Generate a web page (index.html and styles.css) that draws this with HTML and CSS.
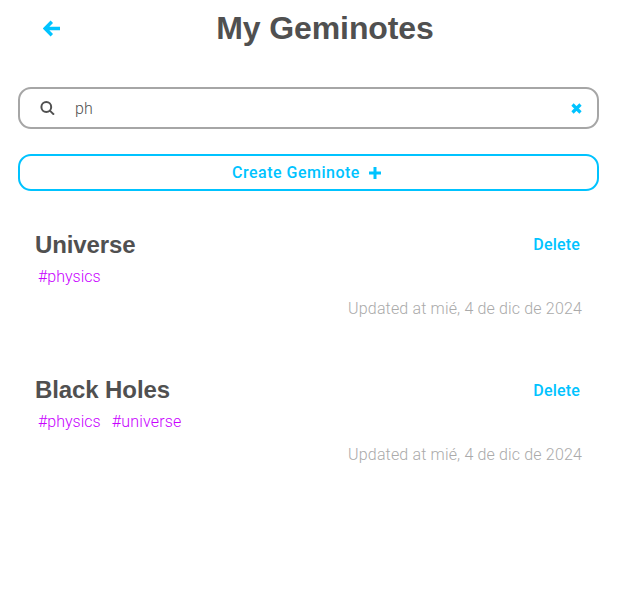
FILE: index.html
```html
<!DOCTYPE html>
<html>
<head>
	<title>My Geminotes</title>
	<link rel="stylesheet" href="styles.css">
</head>
<body>
	<div class="page">
		<div class="header">
			<svg class="back" viewBox="0 0 17 17"><path d="M8.8 1.8 L2.2 8.5 L8.8 15.2 M3 8.5 H17" fill="none" stroke="#00c3ff" stroke-width="3.4"/></svg>
			<h1>My Geminotes</h1>
		</div>

		<div class="search">
			<svg class="lens" viewBox="0 0 15 14"><circle cx="6.3" cy="6" r="4.9" fill="none" stroke="#505050" stroke-width="2"/><path d="M9.8 9.6 L14 13.6" stroke="#505050" stroke-width="2"/></svg>
			<span class="query">ph</span>
			<svg class="clear" viewBox="0 0 11 11"><path d="M1.5 1.5 L9.5 9.5 M9.5 1.5 L1.5 9.5" stroke="#00c3ff" stroke-width="3.2"/></svg>
		</div>

		<div class="create">
			<span>Create Geminote</span>
			<svg class="plus" viewBox="0 0 12 12"><path d="M6 0 V12 M0 6 H12" stroke="#00c3ff" stroke-width="3"/></svg>
		</div>

		<div class="note">
			<div class="note-top">
				<h2>Universe</h2>
				<span class="delete">Delete</span>
			</div>
			<div class="tags">
				<span>#physics</span>
			</div>
			<p class="updated">Updated at mié, 4 de dic de 2024</p>
		</div>

		<div class="note">
			<div class="note-top">
				<h2>Black Holes</h2>
				<span class="delete">Delete</span>
			</div>
			<div class="tags">
				<span>#physics</span>
				<span>#universe</span>
			</div>
			<p class="updated">Updated at mié, 4 de dic de 2024</p>
		</div>
	</div>
</body>
</html>
```

FILE: styles.css
```css
html, body {
	margin: 0;
	padding: 0;
	background: white;
}

.page {
	width: 581px;
	margin-left: 18px;
	font-family: "Liberation Sans", Arial, sans-serif;
	color: #505050;
}

.header {
	display: flex;
	align-items: center;
	justify-content: center;
	height: 56px;
	padding-left: 33px;
	position: relative;
}

.header h1 {
	margin: 0;
	font-size: 32px;
	font-weight: bold;
	color: #505050;
	letter-spacing: -0.1px;
}

.back {
	position: absolute;
	left: 25px;
	top: 20px;
	width: 17px;
	height: 17px;
}

.search {
	display: flex;
	align-items: center;
	height: 38px;
	margin-top: 31px;
	border: 2px solid #a6a6a6;
	border-radius: 13px;
	padding: 0 15px 0 20px;
}

.lens {
	width: 15px;
	height: 14px;
}

.query {
	flex: 1;
	margin-left: 20px;
	font-family: Roboto, sans-serif;
	font-weight: 300;
	font-size: 16px;
	color: #505050;
}

.clear {
	width: 11px;
	height: 11px;
}

.create {
	display: flex;
	align-items: center;
	justify-content: center;
	gap: 9px;
	height: 33px;
	margin-top: 25px;
	padding-right: 4px;
	border: 2px solid #00c3ff;
	border-radius: 13px;
	color: #00c3ff;
	font-family: Roboto, sans-serif;
	font-weight: 500;
	font-size: 16px;
	letter-spacing: 0.5px;
}

.plus {
	width: 12px;
	height: 12px;
}

.note {
	padding: 0 17px;
	height: 145px;
}

.create + .note {
	margin-top: 38px;
}

.note-top {
	display: flex;
	justify-content: space-between;
	align-items: center;
	height: 32px;
}

.note-top h2 {
	margin: 0;
	font-size: 24px;
	font-weight: bold;
	color: #505050;
	letter-spacing: -0.1px;
}

.delete {
	margin-right: 2px;
	margin-bottom: 1px;
	color: #00c3ff;
	font-family: Roboto, sans-serif;
	font-weight: 500;
	font-size: 16px;
	letter-spacing: 0.2px;
}

.note + .note .delete {
	margin-bottom: 0;
}

.tags {
	display: flex;
	gap: 11px;
	margin-top: 6px;
	padding-left: 3px;
	color: #c800ff;
	font-family: Roboto, sans-serif;
	font-weight: 300;
	font-size: 16px;
}

.tags span + span {
	letter-spacing: 0.2px;
}

.updated {
	margin: 13px 0 0;
	text-align: right;
	color: #aaaaaa;
	font-family: Roboto, sans-serif;
	font-weight: 300;
	font-size: 16px;
	letter-spacing: 0.16px;
}

.note + .note .updated {
	margin-top: 14px;
}
```
